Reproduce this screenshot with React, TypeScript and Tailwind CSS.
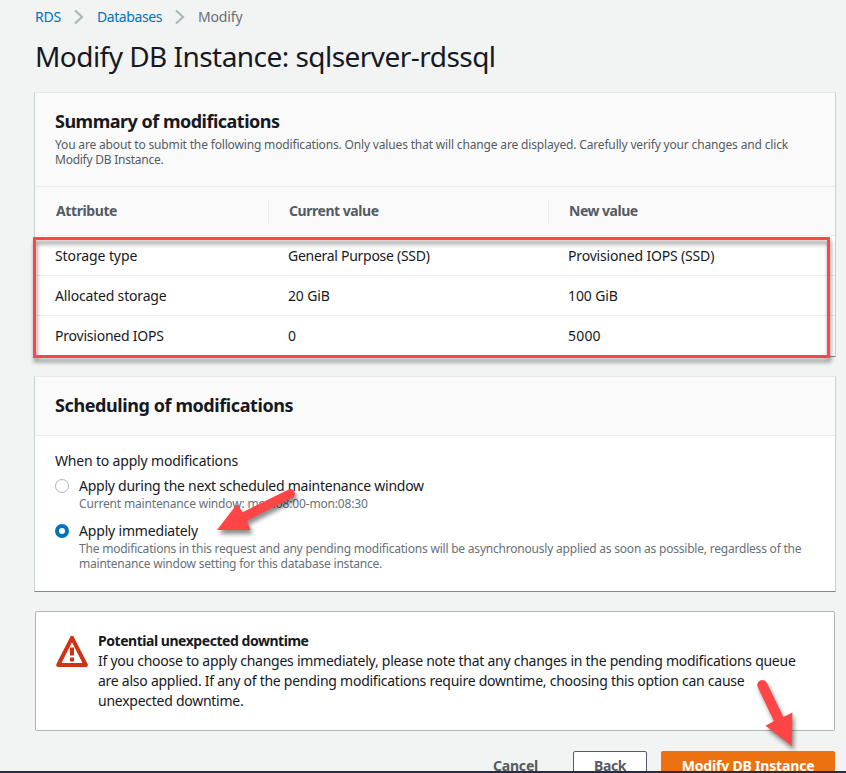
import React from "react";

const rows = [
  [
    { text: "Storage type", tracking: "tracking-[-0.1px]" },
    { text: "General Purpose (SSD)", tracking: "tracking-[-0.28px]" },
    { text: "Provisioned IOPS (SSD)", tracking: "tracking-[-0.17px]" },
  ],
  [
    { text: "Allocated storage", tracking: "tracking-[-0.18px]" },
    { text: "20 GiB", tracking: "tracking-[-0.15px]" },
    { text: "100 GiB", tracking: "tracking-[-0.1px]" },
  ],
  [
    { text: "Provisioned IOPS", tracking: "tracking-[-0.22px]" },
    { text: "0", tracking: "tracking-normal" },
    { text: "5000", tracking: "tracking-[0.2px]" },
  ],
];

function Chevron() {
  return (
    <svg className="h-4 w-[10px]" viewBox="0 0 10 16" fill="none" stroke="#aab7b8" strokeWidth="2.2">
      <path d="M1 1.5 L8 8 L1 14.5" />
    </svg>
  );
}

function Panel({ className, children }: { className: string; children: React.ReactNode }) {
  return (
    <section
      className={`ml-[34px] w-[802px] border-x border-t border-b border-x-[#c9d0d1] border-t-[#e3e8e9] border-b-[#7d8a8c] bg-white ${className}`}
    >
      {children}
    </section>
  );
}

export default function App() {
  return (
    <div className="relative flex h-[773px] w-[846px] flex-col overflow-hidden whitespace-nowrap bg-[#f2f3f3] font-['Noto_Sans',sans-serif] text-[14px] leading-5 text-[#16191f]">
      <nav className="flex h-[34px] items-center pl-[35px] text-[#0073bb]">
        <span className="w-[39px] tracking-[-0.25px]">RDS</span>
        <Chevron />
        <span className="ml-[13px] w-[78px] tracking-[-0.42px]">Databases</span>
        <Chevron />
        <span className="ml-[13px] tracking-[-0.15px] text-[#687078]">Modify</span>
      </nav>
      <h1 className="h-[58px] pl-[35px] pt-[4px] text-[28px] leading-9 tracking-[-0.54px]">Modify DB Instance: sqlserver-rdssql</h1>

      <Panel className="h-[265px]">
        <header className="h-[94px] border-b border-[#eaeded] bg-[#fafafa] pl-5 pt-[17px]">
          <h2 className="text-[18px] font-bold leading-[22px] tracking-[-0.5px]">Summary of modifications</h2>
          <div className="mt-[5px] text-[12px] leading-[15px] text-[#545b64]">
            <p className="tracking-[-0.162px]">You are about to submit the following modifications. Only values that will change are displayed. Carefully verify your changes and click</p>
            <p className="tracking-[-0.25px]">Modify DB Instance.</p>
          </div>
        </header>
        <div className="grid h-[49px] grid-cols-[234px_280px_1fr] items-center border-b border-[#eaeded] bg-[#fafafa] font-bold leading-6 text-[#545b64]">
          <div className="h-6 border-r border-[#eaeded] pl-[21px] tracking-[-0.4px]">Attribute</div>
          <div className="h-6 border-r border-[#eaeded] pl-5 tracking-[-0.46px]">Current value</div>
          <div className="h-6 pl-5 tracking-[-0.5px]">New value</div>
        </div>
        {rows.map((row) => (
          <div key={row[0].text} className="grid h-10 grid-cols-[233px_280px_1fr] items-center border-b border-[#eaeded] last:border-b-0">
            {row.map((cell) => (
              <span key={cell.text} className={`pl-5 ${cell.tracking}`}>{cell.text}</span>
            ))}
          </div>
        ))}
      </Panel>

      <Panel className="mt-[19px] h-[216px]">
        <header className="flex h-[59px] items-center border-b border-[#eaeded] bg-[#fafafa] pb-[2px] pl-5">
          <h2 className="text-[18px] font-bold leading-[22px] tracking-[-0.41px]">Scheduling of modifications</h2>
        </header>
        <div className="pl-5 pt-[15px]">
          <p className="tracking-[-0.18px]">When to apply modifications</p>
          <div className="mt-[5px] flex gap-[10px]">
            <span className="mt-[3px] size-[14px] rounded-full border border-[#aab7b8] bg-white" />
            <div>
              <p className="tracking-[-0.25px]">Apply during the next scheduled maintenance window</p>
              <p className="text-[12px] leading-[15px] tracking-[-0.17px] text-[#687078]">Current maintenance window: mon:08:00-mon:08:30</p>
            </div>
          </div>
          <div className="mt-[10px] flex gap-[10px]">
            <span className="mt-[3px] size-[14px] rounded-full border-4 border-[#0073bb] bg-white" />
            <div>
              <p className="tracking-[-0.18px]">Apply immediately</p>
              <div className="text-[12px] leading-[15px] text-[#687078]">
                <p className="tracking-[-0.21px]">The modifications in this request and any pending modifications will be asynchronously applied as soon as possible, regardless of the</p>
                <p className="tracking-[-0.21px]">maintenance window setting for this database instance.</p>
              </div>
            </div>
          </div>
        </div>
      </Panel>

      <section className="ml-[35px] mt-[19px] flex h-[120px] w-[800px] rounded-[2px] border border-[#aab7b8] bg-white pl-5 pt-[19px]">
        <svg className="mt-[4px] size-8" viewBox="0 0 32 32">
          <path d="M16 2.8 L29.8 30 H2.2 Z" fill="none" stroke="#d13212" strokeWidth="4" strokeLinejoin="round" />
          <path d="M14 12.5 h4 v8 h-4 Z M14 22.5 h4 v4 h-4 Z" fill="#d13212" />
        </svg>
        <div className="ml-[10px]">
          <p className="font-bold tracking-[-0.46px]">Potential unexpected downtime</p>
          <p className="tracking-[-0.262px]">If you choose to apply changes immediately, please note that any changes in the pending modifications queue</p>
          <p className="tracking-[-0.255px]">are also applied. If any of the pending modifications require downtime, choosing this option can cause</p>
          <p className="tracking-[-0.26px]">unexpected downtime.</p>
        </div>
      </section>

      <div className="mt-5 flex h-5 overflow-hidden pl-[493px] font-bold">
        <span className="w-[80px] pt-[5px] tracking-[-0.2px] text-[#545b64]">Cancel</span>
        <span className="h-8 w-[74px] rounded-[2px] border border-[#545b64] bg-white pt-1 text-center tracking-[-0.4px] text-[#545b64]">Back</span>
        <span className="ml-[14px] h-8 w-[174px] rounded-[2px] bg-[#ec7211] pt-[5px] text-center tracking-[-0.18px] text-white">Modify DB Instance</span>
      </div>
      <div className="h-[2px] bg-[#232f3e]" />

      <div className="absolute left-[33px] top-[237px] h-[121px] w-[797px] border-[3px] border-[#ff4545] drop-shadow-[1px_4px_2px_rgba(0,0,0,0.45)]" />
      <svg className="absolute left-0 top-0 h-[773px] w-[846px] drop-shadow-[2px_4px_2px_rgba(0,0,0,0.45)]" viewBox="0 0 846 773" fill="#ff4545">
        <path d="M217 530 L237 504 L242.5 512.3 L288.5 489.4 A4.6 4.6 0 0 1 292.6 497.6 L246.8 520.7 L250.5 530 Z" />
        <path d="M791.8 746 L765.5 725.7 L774 721 L757.8 687.3 A5 5 0 0 1 766.8 682.7 L783.3 717 L792.4 712.5 Z" />
      </svg>
    </div>
  );
}
